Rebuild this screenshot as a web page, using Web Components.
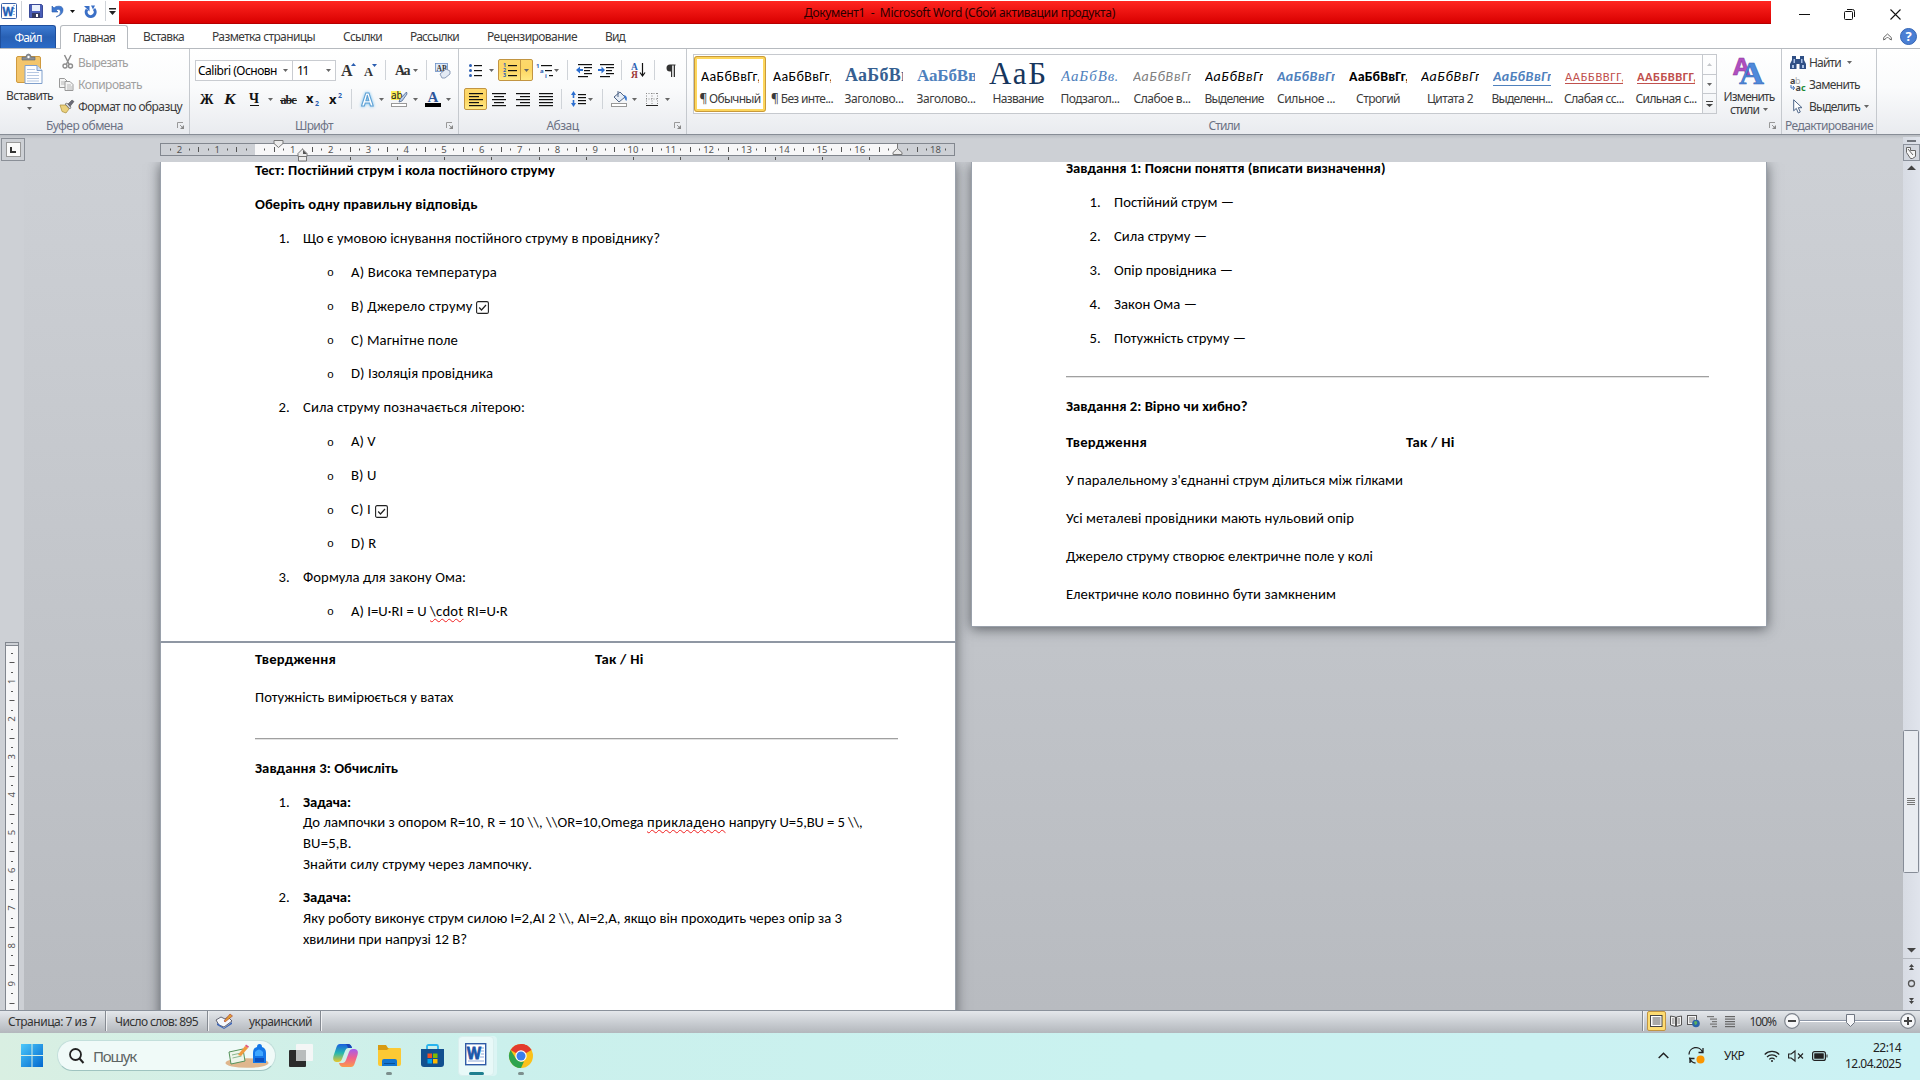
<!DOCTYPE html>
<html lang="uk">
<head>
<meta charset="UTF-8">
<title>Документ1 - Microsoft Word</title>
<style>
    html, body { margin: 0; padding: 0; }
    body {
        width: 1920px;
        height: 1080px;
        overflow: hidden;
        font: 12px 'Noto Sans', 'Open Sans', sans-serif;
        color: #3b3b3b;
    }
</style>
</head>
<body>
<word-app></word-app>

<script>
// 1. Icons: [width, height, svg content]
const serif = 'font-family="Liberation Serif, serif"';
const sans = 'font-family="Noto Sans, sans-serif"';
const lines = (x, w, ys, c = '#111') => ys.map((y, i) =>
    `<rect x="${Array.isArray(x) ? x[i] : x}" y="${y}" width="${Array.isArray(w) ? w[i] : w}" height="1.2" fill="${c}"/>`).join('');

const ICONS = {
    down: [5, 3, '<path d="M0 0h5L2.5 3z" fill="#666"/>'],
    downBlack: [5, 3, '<path d="M0 0h5L2.5 3z" fill="#111"/>'],
    sep: [1, 20, '<rect width="1" height="20" fill="#cfd3d8"/>'],
    word: [16, 16, `<rect x=".5" y=".5" width="15" height="15" rx="1" fill="#fff" stroke="#3a62a8"/><path d="M12 2h2v1h-2zM12 5h2v1h-2zM12 8h2v1h-2zM12 11h2v1h-2z" fill="#9cb4dc"/><text x="1.5" y="12.5" font-size="12" font-weight="bold" fill="#1f5fb5" stroke="#1f5fb5" stroke-width=".4" textLength="11" lengthAdjust="spacingAndGlyphs" ${sans}>W</text>`],
    save: [14, 14, '<path d="M.5 .5h12l1 1v12H.5z" fill="#4a5fb8" stroke="#3a4a98"/><path d="M3 1h8v6H3z" fill="#eaf1fb"/><path d="M3 9h8v5H3z" fill="#333b63"/><path d="M7 10h2v3H7z" fill="#fff"/>'],
    undo: [13, 13, '<path d="M1 1v6h6L5 5q4-2 4.500 1.500T5 12q7-2 7-7T5 1.500L3 3z" fill="#3e77cf" stroke="#2b5cab" stroke-width=".6"/>'],
    redo: [13, 13, '<path d="M3 4.500a4.500 4.500 0 1 0 7-.5" fill="none" stroke="#3a6fc6" stroke-width="3"/><path d="M0 1h5.500v5.500z" fill="#3a6fc6"/><path d="M7 0.500h4l-2 4z" fill="#3a6fc6"/>'],
    customize: [7, 7, '<path d="M0 0h7v1.500H0zM0 3h7L3.500 7z" fill="#222"/>'],
    minimize: [11, 11, '<path d="M0 5.500h11" stroke="#111"/>'],
    restore: [11, 11, '<rect x=".5" y="2.500" width="8" height="8" rx="1" fill="none" stroke="#111"/><path d="M3 .5h5.500a2 2 0 0 1 2 2V8" fill="none" stroke="#111"/>'],
    close: [11, 11, '<path d="M.5 .5l10 10M10.500 .5l-10 10" stroke="#111" stroke-width="1.100"/>'],
    caret: [9, 8, '<path d="M.7 4.500L4.500 1l3.800 3.500v2.500L6 5.500 4.500 4 3 5.500.7 7z" fill="#fff" stroke="#555" stroke-width=".9"/>'],
    help: [17, 17, `<circle cx="8.500" cy="8.500" r="8" fill="#4a7fd4" stroke="#3465b4"/><text x="8.500" y="13" font-size="13" font-weight="bold" fill="#fff" text-anchor="middle" ${sans}>?</text>`],
    launcher: [8, 8, '<path d="M.5 6V.5H6M3 3l3 3" fill="none" stroke="#999"/><path d="M7 3v4H3z" fill="#888"/>'],

    paste: [27, 31, '<rect x=".5" y="2.500" width="24" height="26" rx="1.500" fill="#f3c56b" stroke="#cf9a3f"/><path d="M6 5V3h4q0-3 2.500-3T15 3h4v3H6z" fill="#8a8f96" stroke="#5f646b" stroke-width=".6"/><circle cx="12.500" cy="3" r="1.200" fill="#fff"/><path d="M9 11.500h12l5 5V29.500H9z" fill="#fdfeff" stroke="#7f9fcc"/><path d="M21 11.500v5h5" fill="#d6e3f5" stroke="#7f9fcc"/><path d="M11 15.500h8M11 18.500h12M11 21.500h12M11 24.500h12M11 27h12" stroke="#b6c8e2"/>'],
    cut: [12, 14, '<path d="M2.500 0l4.500 9M9 0L4.500 9" stroke="#8d8d8d" stroke-width="1.500" fill="none"/><circle cx="3" cy="11" r="2" fill="none" stroke="#8d8d8d" stroke-width="1.400"/><circle cx="8.500" cy="11" r="2" fill="none" stroke="#8d8d8d" stroke-width="1.400"/>'],
    copy: [15, 13, '<path d="M.5 .5h5l3 3v6h-8z" fill="#f4f4f4" stroke="#999"/><path d="M6 3.500h5l3 3v6H6z" fill="#f4f4f4" stroke="#999"/><path d="M2 4h4M2 6h4M8 7h4M8 9h5M8 11h5" stroke="#aaa" stroke-width=".8"/>'],
    painter: [15, 13, '<path d="M1 5l6 0 3 4-3 4-4-1.500z" fill="#ead07c" stroke="#a98c3a" stroke-width=".7"/><path d="M6 4l5 5 1-2-4-4z" fill="#d7d9dd" stroke="#555" stroke-width=".6"/><path d="M9 4l4-4 2 1.500-4 5z" fill="#6a6a78" stroke="#444" stroke-width=".5"/>'],

    grow: [15, 14, `<text x="0" y="13" font-size="16" font-weight="bold" fill="#333" ${serif}>A</text><path d="M10 3h5l-2.500-3z" fill="#2a5db0"/>`],
    shrink: [13, 14, `<text x="0" y="13" font-size="12.500" font-weight="bold" fill="#333" ${serif}>A</text><path d="M8 1h5l-2.500 3z" fill="#2a5db0"/>`],
    textCase: [16, 14, `<text x="0" y="12" font-size="14" font-weight="bold" fill="#333" textLength="15.500" ${serif}>Aa</text>`],
    clear: [16, 15, `<rect x=".5" y=".5" width="12" height="8" fill="#dfeaf8" stroke="#6a8fc6" stroke-width=".8"/><text x="1.500" y="7.500" font-size="7.500" font-weight="bold" fill="#333" ${serif}>AB</text><path d="M5 11l6-5 4 2v3l-5 4H7z" fill="#e4ebf5" stroke="#7388a8" stroke-width=".8"/>`],
    bold: [14, 14, `<text x="0" y="12" font-size="15" font-weight="bold" fill="#111" textLength="13.500" lengthAdjust="spacingAndGlyphs" ${serif}>Ж</text>`],
    italic: [13, 14, `<text x="0" y="12" font-size="15" font-weight="bold" font-style="italic" fill="#111" textLength="11.500" lengthAdjust="spacingAndGlyphs" ${serif}>К</text>`],
    underline: [11, 14, `<text x="0" y="11" font-size="14" font-weight="bold" fill="#111" textLength="10" lengthAdjust="spacingAndGlyphs" ${serif}>Ч</text><path d="M1 13.500h9" stroke="#111"/>`],
    strike: [17, 14, `<text x="0.500" y="11.500" font-size="12" font-weight="bold" fill="#222" textLength="16" ${serif}>abc</text><path d="M0 8.500h17" stroke="#222"/>`],
    sub: [14, 14, `<text x="0" y="11" font-size="13" font-weight="bold" fill="#111" ${sans}>x</text><text x="9" y="14" font-size="7" font-weight="bold" fill="#2a5db0" ${sans}>2</text>`],
    sup: [14, 14, `<text x="0" y="12" font-size="13" font-weight="bold" fill="#111" ${sans}>x</text><text x="9" y="5.500" font-size="7" font-weight="bold" fill="#2a5db0" ${sans}>2</text>`],
    effects: [17, 17, `<text x="1.500" y="14.500" font-size="17" font-weight="bold" fill="#fff" stroke="#5d9fd3" stroke-width="1" style="filter:drop-shadow(0 0 1.500px #6fbdf0)" ${sans}>A</text>`],
    marker: [17, 16, `<rect x="0" y="0" width="10" height="9" fill="#fbf05a"/><text x="0" y="8" font-size="10" fill="#222" ${sans}>ab</text><path d="M15.500 1L9 8l-1 3 3-1 5-7z" fill="#b9cde8" stroke="#4c678f" stroke-width=".8"/><rect x=".5" y="12.500" width="15" height="3" fill="#fff" stroke="#999"/>`],
    fontColor: [16, 16, `<text x="2.500" y="11" font-size="15" font-weight="bold" fill="#2d559b" ${serif}>A</text><rect y="12" width="16" height="4" fill="#000"/>`],

    bullets: [13, 13, lines(5, 8, [1, 6, 11]) + '<circle cx="1.500" cy="1.500" r="1.500" fill="#2c5fb3"/><circle cx="1.500" cy="6.500" r="1.500" fill="#2c5fb3"/><circle cx="1.500" cy="11.500" r="1.500" fill="#2c5fb3"/>'],
    numbers: [15, 14, lines(5, 9, [2, 7, 12]) + [4, 9, 14].map((y, i) => `<text x="0" y="${y}" font-size="5.500" font-weight="bold" fill="#2c5fb3" ${sans}>${i + 1}</text>`).join('')],
    multi: [17, 15, lines([5, 9, 13], [11, 7, 4], [2, 7, 12]) + `<text x="0" y="4.500" font-size="6" font-weight="bold" fill="#2c5fb3" ${sans}>1</text><text x="4" y="10" font-size="6" font-weight="bold" fill="#2c5fb3" ${sans}>a</text><text x="9" y="15" font-size="6" font-weight="bold" fill="#2c5fb3" ${sans}>i</text>`],
    outdent: [16, 13, lines([2, 8, 8, 8, 2], [14, 8, 6, 8, 10], [0, 3, 6, 9, 12]) + '<path d="M0 6l4-3.500V5h3v2H4v2.500z" fill="#2c6fd0"/>'],
    indent: [16, 13, lines([2, 8, 8, 8, 2], [14, 8, 6, 8, 10], [0, 3, 6, 9, 12]) + '<path d="M7 6L3.500 2.500V5H0v2h3.500v2.500z" fill="#2c6fd0"/>'],
    sort: [14, 16, `<text x="0" y="7.500" font-size="9.500" font-weight="bold" fill="#2c5fb3" ${serif}>А</text><text x="0" y="15.500" font-size="9.500" font-weight="bold" fill="#9c3535" ${serif}>Я</text><path d="M11.500 1v12M9 10.500l2.500 3.500 2.500-3.500" fill="none" stroke="#111" stroke-width="1.200"/>`],
    pilcrow: [10, 13, '<path d="M9.500 .5H4a3.500 3.500 0 0 0 0 7h1V13h1.200V1.500h1.500V13H9V1.500h.5z" fill="#333"/>'],
    alignLeft: [14, 13, lines(0, [14, 10, 14, 10, 14], [0, 3, 6, 9, 12])],
    alignCenter: [14, 13, lines([0, 2, 0, 2, 0], [14, 10, 14, 10, 14], [0, 3, 6, 9, 12])],
    alignRight: [14, 13, lines([0, 4, 0, 4, 0], [14, 10, 14, 10, 14], [0, 3, 6, 9, 12])],
    justify: [14, 13, lines(0, 14, [0, 3, 6, 9, 12])],
    spacing: [15, 16, lines(7, 8, [3, 6, 9, 12]) + '<path d="M2.500 0L5 4H3.300v3H1.700V4H0zM2.500 16L5 12H3.300V9H1.700v3H0z" fill="#2c6fd0"/>'],
    bucket: [16, 16, '<path d="M3 6l6-5 5 5-6 5z" fill="#e6edf6" stroke="#4f6486"/><path d="M7 0v6" stroke="#4f6486"/><path d="M13 4q4 1 2.500 6-2-1-2.500-6z" fill="#3f7bd0"/><rect x=".5" y="12.500" width="15" height="3" fill="#fff" stroke="#999"/>'],
    borders: [12, 13, '<path d="M.5 0v12M11.500 0v12M6 0v12M0 .5h12M0 6h12" stroke="#888" stroke-dasharray="1 1.500" fill="none"/><path d="M0 12.500h12" stroke="#222"/>'],

    scrollUp: [5, 3, '<path d="M0 3h5L2.500 0z" fill="#c4c6ca"/>'],
    more: [7, 6, '<path d="M0 0h7v1H0zM0 3h7L3.500 6z" fill="#444"/>'],
    changeStyles: [30, 29, `<text x="-1" y="19" font-size="24" font-weight="bold" fill="#b04fc0" stroke="#8a359a" stroke-width=".5" textLength="17" lengthAdjust="spacingAndGlyphs" ${sans}>A</text><text x="5" y="28" font-size="32" font-weight="bold" fill="#4f8adb" stroke="#2f62b3" stroke-width=".5" textLength="25" lengthAdjust="spacingAndGlyphs" ${serif}>A</text>`],
    find: [16, 13, '<path d="M2 0h4v3h4V0h4v4l2 4v5H9.500V8h-3v5H0V8l2-4z" fill="#2f4f85"/><path d="M2 9h2v3H2zM12 9h2v3h-2zM3.500 3h1.500v4H3.500zM11 3h1.500v4H11z" fill="#a9c0e6"/>'],
    replace: [16, 15, `<text x="0" y="6.500" font-size="9" font-weight="bold" fill="#444" ${sans}>a</text><text x="5" y="6.500" font-size="9" fill="#aaa" ${sans}>b</text><text x="5.500" y="14" font-size="9" font-weight="bold" fill="#444" ${sans}>a</text><text x="11" y="14" font-size="9" font-weight="bold" fill="#1c8a35" ${sans}>c</text><path d="M1 8v3h3M3 9l1.500 2L3 13" fill="none" stroke="#3466b5"/>`],
    select: [10, 15, '<path d="M.7 .8v11l2.600-2.400 2 4.600 2-1-2-4.300h3.700z" fill="#fff" stroke="#4c6488"/>'],

    proof: [17, 15, '<path d="M0 6l5-3 4 2 3-2 4 4-8 6-5-2z" fill="#f5f8fc" stroke="#445" stroke-width=".8"/><path d="M1 9l7 5 8-6v2l-8 5-7-4z" fill="#3d66b8"/><path d="M8 7l6-7 2.500 2L9 8z" fill="#e0a030" stroke="#a33" stroke-width=".6"/>'],
    viewPrint: [13, 12, '<rect x=".5" y=".5" width="11.500" height="11" fill="#fff" stroke="#444"/><path d="M2.500 3h8M2.500 5h8M2.500 7h8M2.500 9h8" stroke="#555"/>'],
    viewRead: [12, 12, '<path d="M.5 1l5 1v9.500l-5-1.500zM11.500 1l-5 1v9.500l5-1.500z" fill="#f4f4f4" stroke="#555"/><path d="M2 4h2.500M2 6h2.500M2 8h2.500M7.500 4H10M7.500 6H10M7.500 8H10" stroke="#777"/>'],
    viewWeb: [13, 13, '<rect x=".5" y=".5" width="9" height="9" fill="#f4f4f4" stroke="#555"/><path d="M2 3h6M2 5h6M2 7h5" stroke="#777"/><circle cx="9" cy="8.500" r="3.800" fill="#2b64a8"/><path d="M7 7q2-2 3 0t-2 3z" fill="#5bb15b"/>'],
    viewOutline: [10, 11, lines([0, 3, 5, 3, 5], [7, 7, 5, 7, 5], [0, 2.5, 5, 7.5, 10], '#777')],
    viewDraft: [10, 11, lines(0, 10, [0, 2.5, 5, 7.5, 10], '#666')],
    zoomOut: [16, 16, '<circle cx="8" cy="8" r="7.300" fill="#f5f6f8" stroke="#7c828b" stroke-width="1.200"/><path d="M4 7h8v2H4z" fill="#444"/>'],
    zoomIn: [16, 16, '<circle cx="8" cy="8" r="7.300" fill="#f5f6f8" stroke="#7c828b" stroke-width="1.200"/><path d="M4 7h8v2H4zM7 4h2v8H7z" fill="#444"/>'],
    zoomTrack: [100, 14, '<path d="M0 7.500h100" stroke="#fff"/><path d="M0 6.500h100" stroke="#8d97a8"/><path d="M46.500 .5h8v8l-4 4-4-4z" fill="#f5f6f8" stroke="#6f7681"/>'],

    start: [22, 23, '<defs><linearGradient id="s" x2="1" y2="1"><stop stop-color="#4cc8fa"/><stop offset="1" stop-color="#0268cf"/></linearGradient></defs><path d="M0 0h10.500v11H0zM11.500 0H22v11H11.500zM0 12h10.500v11H0zM11.500 12H22v11H11.500z" fill="url(#s)"/>'],
    search: [15, 16, '<circle cx="6.500" cy="6.500" r="5.500" fill="none" stroke="#222" stroke-width="1.800"/><path d="M10.500 10.500l4 4.500" stroke="#222" stroke-width="2"/>'],
    school: [44, 24, '<ellipse cx="22" cy="19" rx="21.500" ry="4.800" fill="#dfb68d"/><path d="M4 8l14-3 2 12-14 3z" fill="#eef5ea" stroke="#55925a"/><path d="M7 11l9-2M7.500 14l9-2" stroke="#8ab78c"/><path d="M13 11l7-9 3 2-7 8z" fill="#f09a3e"/><path d="M20 2l1-1.500 3 2L23 4z" fill="#e2557a"/><path d="M28 19V9q0-5 4-6 0-3 2.500-3T37 3q4 1 4 6v10z" fill="#1377e8"/><path d="M30 8q4-5 8 0v4h-8z" fill="#3fa7ff"/><path d="M30 14h9v4h-9z" fill="#0a4fbd"/>'],
    taskView: [24, 23, '<rect y="6" width="17" height="17" rx="1" fill="#2b2b2b"/><rect x="7" width="17" height="17" rx="1" fill="#f4f6f6"/><path d="M7 6h10v11H7z" fill="#b9bcbc"/>'],
    copilot: [25, 23, '<defs><linearGradient id="c1" x2="0" y2="1"><stop stop-color="#1a5fe0"/><stop offset=".5" stop-color="#25b7b0"/><stop offset="1" stop-color="#e9c72b"/></linearGradient><linearGradient id="c2" x2="0" y2="1"><stop stop-color="#a35cf0"/><stop offset=".5" stop-color="#f0608d"/><stop offset="1" stop-color="#fb9a4b"/></linearGradient></defs><path d="M7 0h8q3 0 4 4h-4q-2 0-3 3l-3 8q-1 3-4 3H3q-4-1-2.500-6l3-9Q4.500 0 7 0z" fill="url(#c1)"/><path d="M18 23h-8q-3 0-4-4h4q2 0 3-3l3-8q1-3 4-3h2q4 1 2.500 6l-3 9q-1 3-3.500 3z" fill="url(#c2)"/><path d="M14 0h1q3 0 4 4h-4q-1-4-3-4z" fill="#1846b8"/>'],
    explorer: [24, 23, '<path d="M1 1h8l2 3h12v8H1z" fill="#d99b12"/><path d="M1 6h9l2-2h11q1 0 1 1v15q0 2-2 2H3q-2 0-2-2z" fill="#fcc934"/><path d="M5 22v-5q0-2 2-2h11q2 0 2 2v5z" fill="#1375d0"/><path d="M7 19h11v1H7z" fill="#0a4f96"/>'],
    store: [23, 24, '<path d="M6 6V2.500q0-1.500 1.500-1.500h8Q17 1 17 2.500V6" fill="none" stroke="#29b4ee" stroke-width="1.800"/><path d="M0 5h23v15q0 3-3 3H3q-3 0-3-3z" fill="#12508f"/><path d="M6.500 9.500h4.500V14H6.500z" fill="#f25022"/><path d="M12 9.500h4.500V14H12z" fill="#7fba00"/><path d="M6.500 15h4.500v4.500H6.500z" fill="#00a4ef"/><path d="M12 15h4.500v4.500H12z" fill="#ffb900"/>'],
    wordBig: [22, 23, `<rect x=".7" y=".7" width="20" height="21" fill="#fff" stroke="#2f5ba6" stroke-width="1.400"/><path d="M15 5h4M16 8h3M16 11h3M15 14h4M3 18h16" stroke="#8ca9d8"/><text x="2" y="15.500" font-size="16" font-weight="bold" fill="#1d56a8" stroke="#1d56a8" stroke-width=".8" textLength="14" lengthAdjust="spacingAndGlyphs" ${sans}>W</text>`],
    chrome: [24, 24, '<circle cx="12" cy="12" r="12" fill="#fbc11a"/><path d="M12 12L1.600 6A12 12 0 0 1 22.400 6z" fill="#e33b2e"/><path d="M12 0a12 12 0 0 1 10.400 6H12z" fill="#e33b2e"/><path d="M1.600 6L7.200 15 12 24A12 12 0 0 1 1.600 6z" fill="#2da44e"/><path d="M7 15l5 3 3-.5-3 6.500A12 12 0 0 1 4 20z" fill="#2da44e"/><circle cx="12" cy="12" r="5.700" fill="#fff"/><circle cx="12" cy="12" r="4.500" fill="#3b7ded"/>'],
    chevron: [11, 7, '<path d="M.7 6l4.800-4.800L10.300 6" fill="none" stroke="#222" stroke-width="1.500"/>'],
    sync: [17, 17, '<path d="M1 7.500A7 7 0 0 1 14.500 5M15 1v4.500h-4.500M1.500 10.500l1 4.500M2 16v-4.500h4.500M2 12q2 4 5.500 4" fill="none" stroke="#222" stroke-width="1.300"/><circle cx="12.500" cy="12.500" r="4" fill="#fb9600"/>'],
    wifi: [16, 12, '<path d="M.7 4.500a10.300 10.300 0 0 1 14.600 0M3 7a7 7 0 0 1 10 0M5.300 9.300a3.800 3.800 0 0 1 5.400 0" fill="none" stroke="#222" stroke-width="1.200"/><circle cx="8" cy="11" r="1" fill="#222"/>'],
    mute: [16, 12, '<path d="M.6 4h2.600L7 1v10L3.200 8H.6z" fill="none" stroke="#222" stroke-width="1.100"/><path d="M10 3.500l5 5M15 3.500l-5 5" stroke="#222" stroke-width="1.100"/>'],
    battery: [16, 10, '<rect x=".6" y=".6" width="12.800" height="8.800" rx="2" fill="none" stroke="#222" stroke-width="1.200"/><rect x="2.200" y="2.200" width="9.600" height="5.600" rx=".5" fill="#222"/><path d="M14.500 3.500h1v3h-1z" fill="#222"/>'],
};

class UiIcon extends HTMLElement {
    connectedCallback() {
        const [w, h, body] = ICONS[this.getAttribute('name')];
        this.attachShadow({ mode: 'open' }).innerHTML = `
            <style>
                :host { display: block; flex: none; width: ${w}px; height: ${h}px; white-space: normal; }
                svg { display: block; overflow: visible; }
            </style>
            <svg width="${w}" height="${h}" viewBox="0 0 ${w} ${h}">${body}</svg>
        `;
    }
}
customElements.define('ui-icon', UiIcon);

// 2. One line of text set to a given width
class FitText extends HTMLElement {
    connectedCallback() {
        // no spaces around the slot: white-space is pre
        this.attachShadow({ mode: 'open' }).innerHTML =
            '<style>:host { display: inline-block; flex: none; white-space: pre; }</style><slot></slot>';
        const target = parseFloat(this.getAttribute('w'));
        const natural = this.getBoundingClientRect().width;
        const n = this.textContent.length;
        if (target && natural) this.style.letterSpacing = (target - natural) / n + 'px';
    }
}
customElements.define('fit-text', FitText);

// items: [icon name, left edge]; the gaps come from the edges
function row(start, items) {
    let x = start;
    return items.map(([name, left]) => {
        const html = `<ui-icon name="${name}" style="margin-left:${left - x}px"></ui-icon>`;
        x = left + ICONS[name][0];
        return html;
    }).join('');
}
const fit = (text, w, left = 0) => `<fit-text w="${w}" style="margin-left:${left}px">${text}</fit-text>`;

// 3. Title bar
class TitleBar extends HTMLElement {
    connectedCallback() {
        this.attachShadow({ mode: 'open' }).innerHTML = `
            <style>
                :host { display: flex; height: 25px; background: #fff; align-items: flex-start; }
                .quick { display: flex; width: 119px; height: 22px; align-items: center; }
                .title {
                    width: 1652px; height: 23px; margin-top: 1px;
                    display: flex; align-items: center; box-sizing: border-box; padding-left: 685px;
                    background: linear-gradient(#ff2621, #d90000); border-bottom: 1px solid #b50000; color: #2b0000;
                }
                .buttons { display: flex; align-items: center; height: 28px; }
            </style>
            <div class="quick">${row(0, [['word', 1], ['sep', 21], ['save', 29], ['undo', 51], ['downBlack', 70], ['redo', 84], ['sep', 105], ['customize', 109]])}</div>
            <div class="title">${fit('Документ1  -  Microsoft Word (Сбой активации продукта)', 311)}</div>
            <div class="buttons">${row(1771, [['minimize', 1799], ['restore', 1844], ['close', 1890]])}</div>
        `;
    }
}
customElements.define('title-bar', TitleBar);

// 4. Ribbon tabs
class RibbonTabs extends HTMLElement {
    connectedCallback() {
        this.attachShadow({ mode: 'open' }).innerHTML = `
            <style>
                :host { display: flex; height: 24px; background: #fff; border-bottom: 1px solid #b6babf; box-sizing: border-box; align-items: center; }
                .file {
                    width: 56px; height: 23px; display: flex; align-items: center; justify-content: center;
                    background: linear-gradient(#3d7bd2, #2860b4 50%, #2a6ac6); border-radius: 0 3px 0 0;
                    border: 1px solid #1f4f9c; border-bottom: 0; box-sizing: border-box; color: #fff;
                }
                .active {
                    width: 68px; height: 24px; margin: 0 0 -1px 4px; display: flex; align-items: center; justify-content: center;
                    border: 1px solid #b6babf; border-bottom: 0; border-radius: 3px 3px 0 0; box-sizing: border-box; background: #fff;
                }
            </style>
            <div class="file">${fit('Файл', 27)}</div>
            <div class="active">${fit('Главная', 42)}</div>
            ${fit('Вставка', 41, 15)}${fit('Разметка страницы', 103, 28)}${fit('Ссылки', 39, 28)}
            ${fit('Рассылки', 49, 28)}${fit('Рецензирование', 90, 28)}${fit('Вид', 20, 28)}
            ${row(625, [['caret', 1883], ['help', 1900]])}
        `;
    }
}
customElements.define('ribbon-tabs', RibbonTabs);

// 5. Ribbon group: content above, caption below
class RibbonGroup extends HTMLElement {
    connectedCallback() {
        const w = this.getAttribute('width');
        const launcher = this.hasAttribute('launcher') ? '<ui-icon name="launcher"></ui-icon>' : '';
        this.attachShadow({ mode: 'open' }).innerHTML = `
            <style>
                :host { display: flex; flex-direction: column; flex: none; width: ${w}px; height: 85px; box-sizing: border-box; border-right: 1px solid #c5c9ce; }
                .body { height: 68px; }
                .caption { display: flex; align-items: center; height: 17px; color: #6c7284; }
                .name { flex: 1; display: flex; justify-content: center; padding-right: ${launcher ? 8 : 0}px; }
                ui-icon { margin-right: 4px; }
            </style>
            <div class="body"><slot></slot></div>
            <div class="caption"><div class="name">${fit(this.getAttribute('label'), this.getAttribute('lw'))}</div>${launcher}</div>
        `;
    }
}
customElements.define('ribbon-group', RibbonGroup);

class StyleTile extends HTMLElement {
    connectedCallback() {
        this.attachShadow({ mode: 'open' }).innerHTML = `
            <style>
                :host { display: flex; flex-direction: column; align-items: center; flex: none; width: 72px; height: 56px; box-sizing: border-box; border: 3px solid transparent; }
                :host([selected]) { border-color: #fdd65c; outline: 1px solid #c89a3c; outline-offset: -1px; border-radius: 3px; background: #fff; }
                .preview { width: 58px; height: 26px; margin-top: 4px; overflow: hidden; white-space: nowrap; display: flex; align-items: center; line-height: 26px; color: #000; }
                .name { height: 16px; line-height: 16px; margin-top: 2px; white-space: pre; }
            </style>
            <div class="preview"><slot></slot></div>
            <div class="name">${fit(this.getAttribute('name'), this.getAttribute('nw'))}</div>
        `;
    }
}
customElements.define('style-tile', StyleTile);

const BODY = 'font-family:Carlito,Lato,sans-serif;font-size:14px;padding-top:1px;';
const HEAD = "font-family:Caladea,'Liberation Serif',serif;";
const STYLES = [
    ['¶ Обычный', 61, 'АаБбВвГг,', 60, BODY],
    ['¶ Без инте...', 62, 'АаБбВвГг,', 60, BODY],
    ['Заголово...', 59, 'АаБбВв', 66, HEAD + 'font-weight:bold;font-size:18px;color:#365f91'],
    ['Заголово...', 59, 'АаБбВв', 60, HEAD + 'font-weight:bold;font-size:17px;color:#4f81bd'],
    ['Название', 51, 'АаБ', 59, HEAD + 'font-size:31px;line-height:20px;margin-top:-4px;color:#17365d'],
    ['Подзагол...', 59, 'АаБбВв.', 58, HEAD + 'font-style:italic;font-size:15px;color:#4f81bd'],
    ['Слабое в...', 57, 'АаБбВвГг', 60, BODY + 'font-style:italic;color:#808080'],
    ['Выделение', 59, 'АаБбВвГг', 60, BODY + 'font-style:italic'],
    ['Сильное ...', 58, 'АаБбВвГг', 60, BODY + 'font-style:italic;font-weight:bold;color:#4f81bd'],
    ['Строгий', 44, 'АаБбВвГг,', 60, BODY + 'font-weight:bold'],
    ['Цитата 2', 46, 'АаБбВвГг', 60, BODY + 'font-style:italic'],
    ['Выделенн...', 61, 'АаБбВвГг', 60, BODY + 'font-style:italic;font-weight:bold;color:#4f81bd;line-height:17px;border-bottom:1px solid #4f81bd'],
    ['Слабая сс...', 60, 'ААББВВГГ,', 60, BODY + 'font-size:12.5px;color:#c0504d;line-height:13px;border-bottom:1px solid #c0504d'],
    ['Сильная с...', 61, 'ААББВВГГ,', 60, BODY + 'font-size:12.5px;font-weight:bold;color:#c0504d;line-height:13px;border-bottom:1px solid #c0504d'],
];

class RibbonBar extends HTMLElement {
    connectedCallback() {
        const tiles = STYLES.map(([name, nw, sample, w, css], i) =>
            `<style-tile name="${name}" nw="${nw}"${i ? '' : ' selected'}><fit-text w="${w}" style="${css}">${sample}</fit-text></style-tile>`).join('');
        this.attachShadow({ mode: 'open' }).innerHTML = `
            <style>
                :host { display: flex; height: 86px; box-sizing: border-box; background: linear-gradient(#fff, #fafbfc 45%, #e9ebef); border-bottom: 1px solid #878d96; }
                .flex { display: flex; }
                .col { display: flex; flex-direction: column; }
                .paste { width: 59px; align-items: center; padding-top: 5px; }
                .paste fit-text { line-height: 16px; margin-top: 3px; }
                .cmds { height: 66px; padding-top: 2px; }
                .cmd { display: flex; align-items: center; height: 22px; }
                .off { color: #a0a0a0; }
                .line { display: flex; align-items: center; height: 22px; }
                .combo { display: flex; align-items: center; height: 21px; box-sizing: border-box; border: 1px solid #c9ccd1; background: #fff; color: #000; }
                .on { display: flex; align-items: center; height: 22px; box-sizing: border-box; border: 1px solid #c29542; border-radius: 2px; background: linear-gradient(#fdd86c, #fdd662 50%, #ffe984); }
                .gallery { margin-left: 6px; margin-top: 5px; height: 60px; box-sizing: border-box; border: 1px solid #c6c9ce; background: #fff; padding-top: 1px; }
                .more { width: 14px; height: 60px; margin-top: 5px; }
                .more div { flex: 1; display: flex; align-items: center; justify-content: center; box-sizing: border-box; border: 1px solid #c6c9ce; border-left: 0; margin-top: -1px; }
                .change { margin-left: 6px; width: 52px; align-items: center; padding-top: 7px; line-height: 13px; }
            </style>
            <ribbon-group width="190" label="Буфер обмена" lw="77" launcher>
                <div class="flex">
                    <div class="col paste"><ui-icon name="paste"></ui-icon>${fit('Вставить', 47)}<ui-icon name="down" style="margin-top:3px"></ui-icon></div>
                    <div class="col cmds">
                        <div class="cmd off"><ui-icon name="cut" style="margin-left:3px"></ui-icon>${fit('Вырезать', 50, 4)}</div>
                        <div class="cmd off"><ui-icon name="copy"></ui-icon>${fit('Копировать', 64, 4)}</div>
                        <div class="cmd"><ui-icon name="painter"></ui-icon>${fit('Формат по образцу', 104, 4)}</div>
                    </div>
                </div>
            </ribbon-group>
            <ribbon-group width="269" label="Шрифт" lw="38" launcher>
                <div class="line" style="margin-top:10px">
                    <div class="combo" style="width:98px;margin-left:5px">${fit('Calibri (Основн', 79, 2)}<ui-icon name="down" style="margin-left:6px"></ui-icon></div>
                    <div class="combo" style="width:43px;border-left:0">${fit('11', 11, 4)}<ui-icon name="down" style="margin-left:18px"></ui-icon></div>
                    ${row(336, [['grow', 341], ['shrink', 364], ['sep', 385], ['textCase', 395], ['down', 413], ['sep', 426], ['clear', 435]])}
                </div>
                <div class="line" style="margin-top:7px">
                    ${row(190, [['bold', 200], ['italic', 224], ['underline', 249], ['down', 268], ['strike', 280], ['sub', 306], ['sup', 329], ['sep', 351], ['effects', 360], ['down', 379], ['marker', 391], ['down', 413], ['fontColor', 425], ['down', 446]])}
                </div>
            </ribbon-group>
            <ribbon-group width="228" label="Абзац" lw="32" launcher>
                <div class="line" style="margin-top:10px">
                    ${row(459, [['bullets', 469], ['down', 489]])}
                    <div class="on" style="width:35px;margin-left:4px"><ui-icon name="numbers" style="margin-left:4px"></ui-icon><span style="width:1px;height:20px;background:#c29542;margin:0 3px 0 2px"></span><ui-icon name="down"></ui-icon></div>
                    ${row(533, [['multi', 536], ['down', 554], ['sep', 567], ['outdent', 576], ['indent', 598], ['sep', 621], ['sort', 631], ['sep', 654], ['pilcrow', 666]])}
                </div>
                <div class="line" style="margin-top:7px">
                    <div class="on" style="width:23px;margin-left:5px"><ui-icon name="alignLeft" style="margin-left:4px"></ui-icon></div>
                    ${row(487, [['alignCenter', 492], ['alignRight', 516], ['justify', 539], ['sep', 561], ['spacing', 571], ['down', 588], ['sep', 602], ['bucket', 611], ['down', 632], ['borders', 646], ['down', 665]])}
                </div>
            </ribbon-group>
            <ribbon-group width="1095" label="Стили" lw="31" launcher>
                <div class="flex">
                    <div class="flex gallery">${tiles}</div>
                    <div class="col more"><div style="margin-top:0"><ui-icon name="scrollUp"></ui-icon></div><div><ui-icon name="down"></ui-icon></div><div><ui-icon name="more"></ui-icon></div></div>
                    <div class="col change"><ui-icon name="changeStyles"></ui-icon>
                        <fit-text w="51" style="margin-top:5px">Изменить</fit-text>
                        <div class="cmd" style="height:13px">${fit('стили', 29)}<ui-icon name="down" style="margin-left:4px"></ui-icon></div>
                    </div>
                </div>
            </ribbon-group>
            <ribbon-group width="95" label="Редактирование" lw="88">
                <div class="col cmds" style="padding-left:8px">
                    <div class="cmd"><ui-icon name="find"></ui-icon>${fit('Найти', 32, 3)}<ui-icon name="down" style="margin-left:6px"></ui-icon></div>
                    <div class="cmd"><ui-icon name="replace"></ui-icon>${fit('Заменить', 51, 3)}</div>
                    <div class="cmd"><ui-icon name="select" style="margin-left:3px"></ui-icon>${fit('Выделить', 51, 6)}<ui-icon name="down" style="margin-left:4px"></ui-icon></div>
                </div>
            </ribbon-group>
        `;
    }
}
customElements.define('ribbon-bar', RibbonBar);

// 6. Rulers, 37.8px to a centimetre
const CM = 37.8;

class HRuler extends HTMLElement {
    connectedCallback() {
        const zero = 95;
        let marks = '';
        for (let q = -9; q < 74; q++) {
            const x = zero + q * CM / 4;
            if (x < 4 || x > 790 || q === 0 || q === 68) continue;
            if (q % 4 === 0) marks += `<text x="${x}" y="10" text-anchor="middle">${Math.abs(q / 4)}</text>`;
            else if (q % 2 === 0) marks += `<rect x="${Math.round(x)}" y="4" width="1" height="5"/>`;
            else marks += `<rect x="${Math.round(x)}" y="5.500" width="1" height="2"/>`;
        }
        for (let i = 1; i < 14; i++) marks += `<rect x="${Math.round(zero + i * CM * 1.25)}" y="14" width="1" height="3"/>`;
        this.attachShadow({ mode: 'open' }).innerHTML = `
            <style>
                :host { display: flex; height: 27px; background: linear-gradient(#b9bdc3, #cdd0d5 4px); }
                .corner { width: 24px; height: 23px; margin: 3px 134px 0 1px; border: 1px solid #8a8f97; box-sizing: border-box; display: flex; align-items: center; justify-content: center; }
                .corner div { width: 13px; height: 13px; border: 1px solid #999; background: #fafafa; display: flex; align-items: center; justify-content: center; }
                .corner i { width: 4px; height: 4px; border-left: 2px solid #333; border-bottom: 2px solid #333; }
                svg { margin-top: 8px; margin-left: 1px; overflow: visible; }
                text { font: 9.500px 'Noto Sans', sans-serif; }
            </style>
            <div class="corner"><div><i></i></div></div>
            <svg width="796" height="19" fill="#555">
                <rect x=".5" y=".5" width="794" height="12" fill="#cdd0d5" stroke="#82878f"/>
                <rect x="95" y="1" width="642" height="11" fill="#f7f7f8"/>
                ${marks}
                <path d="M114 -2.500h9v3l-4.500 4-4.500-4z" fill="#ececec" stroke="#777"/>
                <path d="M138 13.500v-3l4.500-4.500 4.500 4.500v3zM138.500 13.500h8v4.500h-8z" fill="#ececec" stroke="#777"/>
                <path d="M143 7l4 4h-4z" fill="#555"/>
                <path d="M733 11.500v-2l4.500-4 4.500 4v2z M737.500 0v5" fill="#ececec" stroke="#777"/>
            </svg>
        `;
    }
}
customElements.define('h-ruler', HRuler);

class VRuler extends HTMLElement {
    connectedCallback() {
        let marks = '';
        for (let q = 1; q < 39; q++) {
            const y = 1.5 + q * CM / 4;
            if (q % 4 === 0) marks += `<text transform="translate(10 ${y}) rotate(-90)" text-anchor="middle">${q / 4}</text>`;
            else if (q % 2 === 0) marks += `<rect x="4.500" y="${Math.round(y)}" width="5" height="1"/>`;
            else marks += `<rect x="6" y="${Math.round(y)}" width="2" height="1"/>`;
        }
        this.attachShadow({ mode: 'open' }).innerHTML = `
            <style>
                :host { display: flex; flex: none; width: 24px; height: 848px; box-sizing: border-box; padding: 480px 0 0 5px; background: #cdd0d5; }
                svg { overflow: hidden; }
                text { font: 9.500px 'Noto Sans', sans-serif; }
            </style>
            <svg width="14" height="368" fill="#555">
                <rect x=".5" y=".5" width="13" height="370" fill="#f7f7f8" stroke="#82878f"/>
                <rect x="1" y="1" width="12" height="2" fill="#cdd0d5"/><rect x="1" y="3" width="12" height="1" fill="#82878f"/>
                ${marks}
            </svg>
        `;
    }
}
customElements.define('v-ruler', VRuler);

// 7. Document
class DocLine extends HTMLElement {
    connectedCallback() {
        const mark = this.getAttribute('mark');
        const circle = mark === 'o';
        const indent = this.hasAttribute('flush') ? 0 : circle ? 72 : mark ? 23.5 : 48;
        const width = circle ? 24 : mark ? 24.5 : 0;
        this.attachShadow({ mode: 'open' }).innerHTML = `
            <style>
                :host { display: flex; flex: none; align-items: center; height: 20.600px; margin-bottom: 13.320px; white-space: pre; }
                :host([bold]) { font-weight: bold; }
                :host([tight]) { margin-bottom: 0; }
                .mark { flex: none; font-weight: normal; width: ${width}px; margin-left: ${indent}px; }
                .circle { font: 11.500px 'Liberation Mono', monospace; padding-top: 2px; }
            </style>
            <span class="mark ${circle ? 'circle' : ''}">${circle ? 'o' : mark ? `<fit-text w="11.500">${mark}</fit-text>` : ''}</span><slot></slot>
        `;
    }
}
customElements.define('doc-line', DocLine);

class CheckBox extends HTMLElement {
    connectedCallback() {
        this.attachShadow({ mode: 'open' }).innerHTML = `
            <style>:host { display: block; flex: none; margin: 4px 0 0 3.500px; white-space: normal; }</style>
            <svg style="display:block" width="13" height="13"><rect x=".6" y=".6" width="11.800" height="11.800" rx="1.500" fill="none" stroke="#222" stroke-width="1.100"/><path d="M3.200 6.500l2.300 2.500 4.500-5" fill="none" stroke="#222" stroke-width="1.200"/></svg>
        `;
    }
}
customElements.define('check-box', CheckBox);

class DocPage extends HTMLElement {
    connectedCallback() {
        this.attachShadow({ mode: 'open' }).innerHTML = `
            <style>
                :host {
                    display: flex; flex-direction: column; flex: none;
                    box-sizing: border-box; width: 796px; background: #fff; padding: 0 57px 0 94px;
                    border: 1px solid #9aa1ab; border-width: 0 1px 1px; box-shadow: 0 2px 12px rgba(40, 45, 50, .65);
                    font: 14.670px Carlito, Lato, 'Noto Sans', sans-serif; color: #000; overflow: hidden;
                }
            </style>
            <slot></slot>
        `;
    }
}
customElements.define('doc-page', DocPage);

const P = (text, w) => `<doc-line flush>${fit(text, w)}</doc-line>`;
const H = (text, w) => `<doc-line flush bold>${fit(text, w)}</doc-line>`;
const N = (mark, text, w) => `<doc-line mark="${mark}">${fit(text, w)}</doc-line>`;
const O = (text, w, extra = '') => `<doc-line mark="o">${fit(text, w)}${extra}</doc-line>`;

class DocView extends HTMLElement {
    connectedCallback() {
        this.attachShadow({ mode: 'open' }).innerHTML = `
            <style>
                :host { display: flex; width: 1879px; height: 848px; overflow: hidden; background: linear-gradient(#cdd0d5, #b8bbc0); }
                /* the two pages touch, so the column carries their shadow */
                .left { display: flex; flex-direction: column; flex: none; height: 901px; margin-left: 136px; box-shadow: 0 2px 12px rgba(40, 45, 50, .65); }
                .left doc-page { box-shadow: none; }
                .right { margin-left: 15px; }
                .first { height: 481px; border-bottom: 2px solid #8f97a3; }
                .second { height: 420px; }
                .third { height: 465px; }
                hr { border: 0; flex: none; height: 1px; background: #a0a0a0; border-bottom: 1px solid #e3e3e3; width: 643px; }
                .err { text-decoration: underline wavy #f02020 1px; text-underline-offset: 2px; text-decoration-skip-ink: none; }
            </style>
            <div class="left">
                <doc-page class="first">
                    <div style="margin-top:-2.300px"></div>
                    ${H('Тест: Постійний струм і кола постійного струму', 300)}
                    ${H('Оберіть одну правильну відповідь', 222.500)}
                    ${N('1.', 'Що є умовою існування постійного струму в провіднику?', 357)}
                    ${O('A) Висока температура', 146)}
                    ${O('B) Джерело струму', 121.500, '<check-box></check-box>')}
                    ${O('C) Магнітне поле', 107)}
                    ${O('D) Ізоляція провідника', 142)}
                    ${N('2.', 'Сила струму позначається літерою:', 222)}
                    ${O('A) V', 24.500)}
                    ${O('B) U', 25.500)}
                    ${O('C) I', 20, '<check-box></check-box>')}
                    ${O('D) R', 25.500)}
                    ${N('3.', 'Формула для закону Ома:', 163)}
                    <doc-line mark="o">${fit('A) I=U·RI = U ', 79)}<fit-text class="err" w="33.500">\\cdot</fit-text>${fit(' RI=U·R', 44.500)}</doc-line>
                </doc-page>
                <doc-page class="second">
                    <div style="height:6px;flex:none"></div>
                    <doc-line flush bold style="margin-bottom:17.500px">${fit('Твердження', 81)}${fit('Так / Ні', 48.500, 259)}</doc-line>
                    ${P('Потужність вимірюється у ватах', 198.500)}
                    <hr style="margin:17px 0 17.600px">
                    ${H('Завдання 3: Обчисліть', 143)}
                    <doc-line bold tight mark="1.">${fit('Задача:', 48)}</doc-line>
                    <doc-line tight>${fit('До лампочки з опором R=10, R = 10 \\\\, \\\\OR=10,Omega ', 344)}<fit-text class="err" w="78.500">прикладено</fit-text>${fit(' напругу U=5,BU = 5 \\\\,', 137)}</doc-line>
                    <doc-line tight>${fit('BU=5,B.', 48.500)}</doc-line>
                    <doc-line>${fit('Знайти силу струму через лампочку.', 229)}</doc-line>
                    <doc-line bold tight mark="2.">${fit('Задача:', 48)}</doc-line>
                    <doc-line tight>${fit('Яку роботу виконує струм силою I=2,AI 2 \\\\, AI=2,A, якщо він проходить через опір за 3', 539)}</doc-line>
                    <doc-line tight>${fit('хвилини при напрузі 12 В?', 164)}</doc-line>
                </doc-page>
            </div>
            <div class="right">
                <doc-page class="third">
                    <div style="margin-top:-4.300px"></div>
                    ${H('Завдання 1: Поясни поняття (вписати визначення)', 319.500)}
                    ${N('1.', 'Постійний струм —', 120)}
                    ${N('2.', 'Сила струму —', 93)}
                    ${N('3.', 'Опір провідника —', 119)}
                    ${N('4.', 'Закон Ома —', 83)}
                    ${N('5.', 'Потужність струму —', 132)}
                    <hr style="margin:15px 0 17.700px">
                    <doc-line flush bold style="margin-bottom:15.200px">${fit('Завдання 2: Вірно чи хибно?', 181.500)}</doc-line>
                    <doc-line flush bold style="margin-bottom:17.400px">${fit('Твердження', 81)}${fit('Так / Ні', 48.500, 259)}</doc-line>
                    <doc-line flush style="margin-bottom:17.400px">${fit("У паралельному з'єднанні струм ділиться між гілками", 337)}</doc-line>
                    <doc-line flush style="margin-bottom:17.400px">${fit('Усі металеві провідники мають нульовий опір', 288)}</doc-line>
                    <doc-line flush style="margin-bottom:17.400px">${fit('Джерело струму створює електричне поле у колі', 307)}</doc-line>
                    ${P('Електричне коло повинно бути замкненим', 270)}
                </doc-page>
            </div>
        `;
    }
}
customElements.define('doc-view', DocView);

class ScrollBar extends HTMLElement {
    connectedCallback() {
        this.attachShadow({ mode: 'open' }).innerHTML = `
            <style>
                :host { display: block; width: 17px; height: 873px; margin-top: -25px; background: linear-gradient(90deg, #d7dbe3, #e0e4ec); }
                svg { display: block; }
            </style>
            <svg width="17" height="873" fill="#444">
                <rect x="4" y="3" width="9" height="2" fill="#70747b"/>
                <rect x=".5" y="7.500" width="16" height="16" fill="#d2d6de" stroke="#8b919b"/>
                <path d="M3.500 10.500h4v3h5v6l-3 2h-2l-4-6z" fill="#f5f5f5" stroke="#666"/><path d="M5 12l5 6" stroke="#666"/>
                <path d="M4 33h9l-4.500-4.500z"/>
                <rect x=".5" y="593.500" width="15" height="142" rx="1" fill="#e9ecf1" stroke="#868c97"/>
                <path d="M4 661.500h8M4 663.500h8M4 665.500h8M4 667.500h8" stroke="#777"/>
                <path d="M4 811h9l-4.500 4.500z"/>
                <path d="M0 821.500h17" stroke="#b4b8bf"/>
                <path d="M6 830l2.500-3 2.500 3zM6 833l2.500-3 2.500 3z"/>
                <circle cx="8.500" cy="846.500" r="3" fill="none" stroke="#555" stroke-width="1.300"/>
                <path d="M6 861l2.500 3 2.500-3zM6 864l2.500 3 2.500-3z"/>
            </svg>
        `;
    }
}
customElements.define('scroll-bar', ScrollBar);

// 8. Status bar
class StatusBar extends HTMLElement {
    connectedCallback() {
        this.attachShadow({ mode: 'open' }).innerHTML = `
            <style>
                :host { display: flex; align-items: center; height: 23px; box-sizing: border-box; padding-bottom: 2px; border-top: 1px solid #8a919b; background: linear-gradient(#e4e7eb, #c8ccd1 55%, #b3b7bc); color: #333; }
                .bar { width: 1px; height: 20px; background: #858a92; border-right: 1px solid #f0f1f3; flex: none; }
                .on { display: flex; align-items: center; justify-content: center; width: 19px; height: 20px; box-sizing: border-box; border: 1px solid #c29542; border-radius: 2px; background: #fddc72; margin-left: 3px; }
                .views { display: flex; align-items: center; margin-left: auto; margin-right: 4px; }
            </style>
            ${fit('Страница: 7 из 7', 88, 8)}<div class="bar" style="margin-left:9px"></div>
            ${fit('Число слов: 895', 83, 8)}<div class="bar" style="margin-left:9px"></div>
            <ui-icon name="proof" style="margin-left:7px"></ui-icon>${fit('украинский', 63, 16)}<div class="bar" style="margin-left:8px"></div>
            <div class="views">
                <div class="bar"></div>
                <div class="on"><ui-icon name="viewPrint"></ui-icon></div>
                ${row(1666, [['viewRead', 1670], ['viewWeb', 1687], ['viewOutline', 1707], ['viewDraft', 1725]])}
                ${fit('100%', 26.500, 14.5)}
                ${row(1776, [['zoomOut', 1784], ['zoomTrack', 1800], ['zoomIn', 1900]])}
            </div>
        `;
    }
}
customElements.define('status-bar', StatusBar);

// 9. Taskbar
class TaskBar extends HTMLElement {
    connectedCallback() {
        this.attachShadow({ mode: 'open' }).innerHTML = `
            <style>
                :host { display: flex; align-items: center; height: 47px; box-sizing: border-box; padding-bottom: 2px; background: linear-gradient(90deg, #d9efe2, #cbf0ec 25%, #caf2f0 60%, #ccf2f4); color: #222; }
                .search { display: flex; align-items: center; width: 219px; height: 31px; box-sizing: border-box; margin-left: 14px; border: 1px solid #c3dfdb; border-bottom-color: #9fc4c0; border-radius: 16px; background: #f0faf8; font-size: 15px; color: #5c6463; }
                .app { display: flex; flex-direction: column; align-items: center; height: 40px; width: 36px; box-sizing: border-box; padding-top: 8px; border-radius: 4px; }
                .app i { width: 6px; height: 3px; border-radius: 2px; background: #7d8f8d; margin-top: auto; margin-bottom: 1px; }
                .app.active { background: #e8f9f8; border: 1px solid #d9efee; box-shadow: 3px 0 0 #dcf5f4; padding-top: 6px; }
                .app.active i { width: 15px; background: #1f7f8f; margin-bottom: 0; }
                .tray { display: flex; align-items: center; margin-left: auto; }
                .clock { display: flex; flex-direction: column; align-items: flex-end; width: 73px; line-height: 16px; margin-right: 19px; }
            </style>
            <ui-icon name="start" style="margin-left:21px"></ui-icon>
            <div class="search"><ui-icon name="search" style="margin-left:11px"></ui-icon>${fit('Пошук', 43, 9)}<ui-icon name="school" style="margin-left:89px"></ui-icon></div>
            <ui-icon name="taskView" style="margin-left:13px"></ui-icon>
            <ui-icon name="copilot" style="margin-left:20px"></ui-icon>
            <div class="app" style="margin-left:13px"><ui-icon name="explorer"></ui-icon><i></i></div>
            <ui-icon name="store" style="margin-left:14px"></ui-icon>
            <div class="app active" style="margin-left:14px"><ui-icon name="wordBig"></ui-icon><i></i></div>
            <div class="app" style="margin-left:9px"><ui-icon name="chrome"></ui-icon><i></i></div>
            <div class="tray">
                ${row(1658, [['chevron', 1658], ['sync', 1688]])}
                ${fit('УКР', 20, 19)}
                ${row(1744, [['wifi', 1764], ['mute', 1788], ['battery', 1812]])}
                <div class="clock">${fit('22:14', 28)}${fit('12.04.2025', 56)}</div>
            </div>
        `;
    }
}
customElements.define('task-bar', TaskBar);

class WordApp extends HTMLElement {
    connectedCallback() {
        this.attachShadow({ mode: 'open' }).innerHTML = `
            <style>
                :host { display: flex; flex-direction: column; width: 1920px; height: 1080px; }
                .work { display: flex; height: 848px; }
            </style>
            <title-bar></title-bar>
            <ribbon-tabs></ribbon-tabs>
            <ribbon-bar></ribbon-bar>
            <h-ruler></h-ruler>
            <div class="work"><v-ruler></v-ruler><doc-view></doc-view><scroll-bar></scroll-bar></div>
            <status-bar></status-bar>
            <task-bar></task-bar>
        `;
    }
}
customElements.define('word-app', WordApp);
</script>
</body>
</html>
